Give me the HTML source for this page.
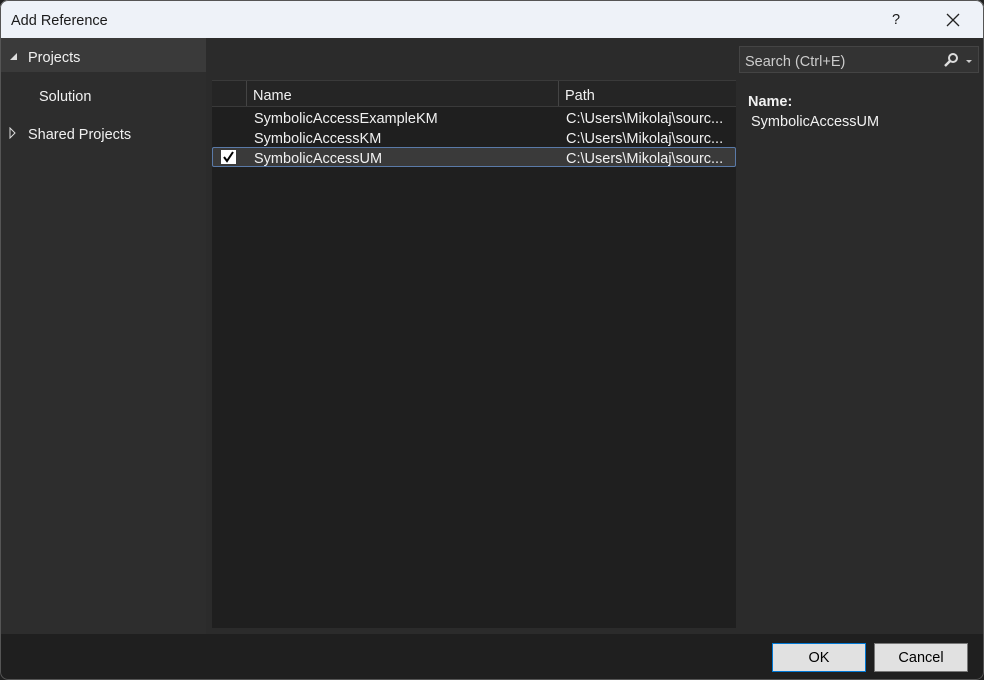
<!DOCTYPE html>
<html><head><style>
*{margin:0;padding:0;box-sizing:border-box}
body{width:984px;height:680px;background:#202020;font-family:"Liberation Sans",sans-serif;font-size:14.5px;color:#f1f1f1;position:relative;overflow:hidden}
.a{position:absolute}
.t{margin-top:2px}
</style></head><body>
<div class="a" style="left:0;top:0;width:984px;height:680px;border-radius:8px;overflow:hidden;background:#2d2d2d">
<div class="a" style="left:0;top:0;width:984px;height:38px;background:#eef2f8;color:#1a1a1a">
<div class="a t" style="left:11px;top:11px">Add Reference</div>
<div class="a t" style="left:892px;top:10px">?</div>
<svg class="a" style="left:946px;top:13px" width="14" height="14"><path d="M1 1L13 13M13 1L1 13" stroke="#222" stroke-width="1.3"/></svg>
</div>
<div class="a" style="left:0;top:38px;width:206px;height:596px;background:#2d2d2d"></div>
<div class="a" style="left:0;top:38px;width:206px;height:34px;background:#3a3a3a"></div>
<svg class="a" style="left:9px;top:52px" width="10" height="10"><path d="M1 8L8 8L8 1Z" fill="#ddd"/></svg>
<div class="a t" style="left:28px;top:48px">Projects</div>
<div class="a t" style="left:39px;top:87px">Solution</div>
<svg class="a" style="left:9px;top:127px" width="8" height="12"><path d="M1 1L6 6L1 11Z" fill="none" stroke="#ddd"/></svg>
<div class="a t" style="left:28px;top:125px">Shared Projects</div>
<div class="a" style="left:206px;top:38px;width:778px;height:596px;background:#2b2b2b"></div>
<div class="a" style="left:212px;top:80px;width:524px;height:548px;background:#1f1f1f"></div>
<div class="a" style="left:212px;top:80px;width:524px;height:27px;background:#252525;border-bottom:1px solid #3a3a3a;border-top:1px solid #3a3a3a"></div>
<div class="a" style="left:246px;top:81px;width:1px;height:25px;background:#444"></div>
<div class="a" style="left:558px;top:81px;width:1px;height:25px;background:#444"></div>
<div class="a t" style="left:253px;top:86px">Name</div>
<div class="a t" style="left:565px;top:86px">Path</div>
<div class="a t" style="left:254px;top:109px">SymbolicAccessExampleKM</div>
<div class="a t" style="left:566px;top:109px">C:\Users\Mikolaj\sourc...</div>
<div class="a t" style="left:254px;top:129px">SymbolicAccessKM</div>
<div class="a t" style="left:566px;top:129px">C:\Users\Mikolaj\sourc...</div>
<div class="a" style="left:212px;top:147px;width:524px;height:20px;background:#3a3a3a;border:1px solid #5a7aa8;border-radius:2px"></div>
<div class="a" style="left:221px;top:150px;width:15px;height:14px;background:#fff"></div>
<svg class="a" style="left:221px;top:150px" width="15" height="14"><path d="M3 7L6 11L12 2" stroke="#000" stroke-width="2" fill="none"/></svg>
<div class="a t" style="left:254px;top:149px">SymbolicAccessUM</div>
<div class="a t" style="left:566px;top:149px">C:\Users\Mikolaj\sourc...</div>
<div class="a" style="left:739px;top:46px;width:240px;height:27px;background:#333;border:1px solid #444"></div>
<div class="a t" style="left:745px;top:52px;color:#ccc">Search (Ctrl+E)</div>
<svg class="a" style="left:942px;top:52px" width="32" height="16"><circle cx="11" cy="6" r="4" stroke="#ddd" stroke-width="2" fill="none"/><path d="M8 9L3 14" stroke="#ddd" stroke-width="2.5"/><path d="M24 8L30 8L27 11Z" fill="#ccc"/></svg>
<div class="a t" style="left:748px;top:92px;font-weight:bold">Name:</div>
<div class="a t" style="left:751px;top:112px">SymbolicAccessUM</div>
<div class="a" style="left:0;top:634px;width:984px;height:46px;background:#1f1f1f"></div>
<div class="a" style="left:772px;top:643px;width:94px;height:29px;background:#e1e1e1;border:1px solid #0078d4;color:#000;text-align:center;line-height:29px">OK</div>
<div class="a" style="left:874px;top:643px;width:94px;height:29px;background:#e1e1e1;border:1px solid #777;color:#000;text-align:center;line-height:29px">Cancel</div>
<div class="a" style="left:0;top:0;width:984px;height:680px;border-radius:8px;border:1px solid #555"></div>
</div>
</body></html>
